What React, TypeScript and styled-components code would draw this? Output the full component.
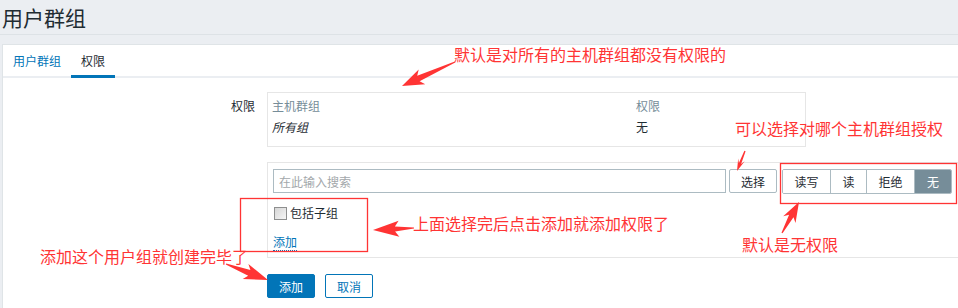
import { createGlobalStyle } from 'styled-components'
import styled from 'styled-components'

const GlobalStyle = createGlobalStyle`
  html, body {
    margin: 0;
    padding: 0;
    background: #ebeef2;
  }
  body {
    font-family: 'Noto Sans CJK SC', 'Liberation Sans', Arial, sans-serif;
    font-size: 12px;
    color: #1f2c33;
    overflow: hidden;
  }
`

const Page = styled.div`
  position: relative;
  width: 958px;
  height: 308px;
  overflow: hidden;
`

const Header = styled.div`
  height: 34px;
  padding: 0 0 1px 2px;
  display: flex;
  align-items: center;
  border-bottom: 1px solid #dde2e6;
  box-sizing: border-box;
  height: 35px;
`

const Title = styled.h1`
  margin: 0;
  font-size: 21px;
  font-weight: 400;
  line-height: 24px;
  color: #1f2c33;
`

const Panel = styled.div`
  margin: 9px 0 0 2px;
  background: #fff;
  border-top: 1px solid #dfe4e7;
  border-left: 1px solid #dfe4e7;
  min-height: 300px;
`

const TabBar = styled.div`
  display: flex;
  border-bottom: 2px solid #ebeef2;
  height: 31px;
`

const Tab = styled.div<{ active?: boolean }>`
  box-sizing: border-box;
  height: 33px;
  padding: 8px 10px 0;
  line-height: 16px;
  color: ${(p) => (p.active ? '#1f2c33' : '#0275b8')};
  border-bottom: 3px solid ${(p) => (p.active ? '#0275b8' : 'transparent')};
`

const Form = styled.div`
  display: grid;
  grid-template-columns: 252px 1fr;
  column-gap: 12px;
  row-gap: 15px;
  padding-top: 14px;
`

const Label = styled.div`
  text-align: right;
  line-height: 16px;
  padding-top: 6px;
`

const Empty = styled.div``

const TableBox = styled.div`
  box-sizing: border-box;
  width: 539px;
  border: 1px solid #e6e6e6;
  padding: 5px 4px 11px;
  display: grid;
  grid-template-columns: 364px 1fr;
  row-gap: 5px;
  line-height: 16px;
`

const HeadCell = styled.div`
  color: #768d99;
`

const Cell = styled.div<{ italic?: boolean }>`
  font-style: ${(p) => (p.italic ? 'italic' : 'normal')};
`

const EditBox = styled.div`
  box-sizing: border-box;
  width: 720px;
  border: 1px solid #e6e6e6;
  padding: 6px 5px 6px;
`

const SearchRow = styled.div`
  display: flex;
  align-items: flex-start;
`

const SearchInput = styled.input`
  box-sizing: border-box;
  width: 453px;
  height: 24px;
  border: 1px solid #acbbc2;
  padding: 0 5px;
  font: inherit;
  color: #1f2c33;
  outline: none;
  &::placeholder {
    color: #a3a8ab;
  }
`

const SelectButton = styled.button`
  box-sizing: border-box;
  margin-left: 3px;
  width: 48px;
  height: 24px;
  border: 1px solid #acbbc2;
  border-radius: 2px;
  background: #fff;
  font: inherit;
  color: #1f2c33;
  padding: 0;
`

const Segments = styled.div`
  display: flex;
  margin-left: 5px;
  border: 1px solid #acbbc2;
  border-radius: 2px;
  height: 25px;
  box-sizing: border-box;
  overflow: hidden;
`

const Segment = styled.div<{ selected?: boolean; w: number }>`
  width: ${(p) => p.w}px;
  display: flex;
  align-items: center;
  justify-content: center;
  background: ${(p) => (p.selected ? '#768d99' : '#fff')};
  color: ${(p) => (p.selected ? '#fff' : '#1f2c33')};
  & + & {
    border-left: 1px solid #acbbc2;
  }
`

const CheckRow = styled.label`
  display: flex;
  align-items: center;
  margin-top: 11px;
  line-height: 16px;
`

const Check = styled.input`
  appearance: none;
  margin: 0 3px 0 1px;
  width: 13px;
  height: 13px;
  border: 1px solid #8e8f8f;
  box-sizing: border-box;
  background: linear-gradient(135deg, #d6d6d6, #f6f6f6);
`

const AddLink = styled.span`
  display: inline-block;
  margin-top: 13px;
  line-height: 16px;
  color: #0275b8;
  border-bottom: 1px dotted #0275b8;
`

const Buttons = styled.div`
  display: flex;
  gap: 10px;
  margin-top: 1px;
`

const Button = styled.button<{ primary?: boolean }>`
  box-sizing: border-box;
  width: 48px;
  height: 24px;
  padding: 0;
  border: 1px solid #0275b8;
  border-radius: 2px;
  font: inherit;
  background: ${(p) => (p.primary ? '#0275b8' : '#fff')};
  color: ${(p) => (p.primary ? '#fff' : '#0275b8')};
`

const Overlay = styled.svg`
  position: absolute;
  left: 0;
  top: 0;
  pointer-events: none;
`

const Note = styled.div<{ x: number; y: number }>`
  position: absolute;
  left: ${(p) => p.x}px;
  top: ${(p) => p.y}px;
  font-size: 16px;
  line-height: 16px;
  color: #ff3434;
  white-space: nowrap;
`

const RED = '#ff3434'

function arrow(x1: number, y1: number, x2: number, y2: number, head: number, headW: number, neckW: number) {
  const dx = x2 - x1
  const dy = y2 - y1
  const len = Math.hypot(dx, dy)
  const ux = dx / len
  const uy = dy / len
  const px = -uy
  const py = ux
  const bx = x2 - ux * head
  const by = y2 - uy * head
  // barbs are swept back a bit
  const sx = x2 - ux * (head + 4)
  const sy = y2 - uy * (head + 4)
  const pts = [
    [x1 + px * 0.6, y1 + py * 0.6],
    [bx + px * neckW, by + py * neckW],
    [sx + px * headW, sy + py * headW],
    [x2, y2],
    [sx - px * headW, sy - py * headW],
    [bx - px * neckW, by - py * neckW],
    [x1 - px * 0.6, y1 - py * 0.6],
  ]
  return pts.map((p) => p.map((v) => v.toFixed(1)).join(',')).join(' ')
}

export default function App() {
  return (
    <Page>
      <GlobalStyle />
      <Header>
        <Title>用户群组</Title>
      </Header>
      <Panel>
        <TabBar>
          <Tab>用户群组</Tab>
          <Tab active>权限</Tab>
        </TabBar>
        <Form>
          <Label>权限</Label>
          <TableBox>
            <HeadCell>主机群组</HeadCell>
            <HeadCell>权限</HeadCell>
            <Cell italic>所有组</Cell>
            <Cell>无</Cell>
          </TableBox>

          <Empty />
          <EditBox>
            <SearchRow>
              <SearchInput placeholder="在此输入搜索" />
              <SelectButton>选择</SelectButton>
              <Segments>
                <Segment w={47}>读写</Segment>
                <Segment w={35}>读</Segment>
                <Segment w={47}>拒绝</Segment>
                <Segment w={36} selected>
                  无
                </Segment>
              </Segments>
            </SearchRow>
            <CheckRow>
              <Check type="checkbox" />
              包括子组
            </CheckRow>
            <AddLink>添加</AddLink>
          </EditBox>

          <Empty />
          <Buttons>
            <Button primary>添加</Button>
            <Button>取消</Button>
          </Buttons>
        </Form>
      </Panel>

      <Overlay width={958} height={308}>
        <polygon points={arrow(455, 62, 402, 86, 18, 8, 3)} fill={RED} />
        <polygon points={arrow(745, 151, 737, 171, 8, 3.5, 1.2)} fill={RED} />
        <polygon points={arrow(782, 233, 799, 202, 16, 7, 2.5)} fill={RED} />
        <polygon points={arrow(414, 228, 373, 230, 22, 8, 2.5)} fill={RED} />
        <polygon points={arrow(226, 264, 268, 280, 20, 8, 3)} fill={RED} />
        <rect x={780.5} y={163.5} width={176} height={40} fill="none" stroke={RED} strokeWidth={1.3} />
        <rect x={240.5} y={198.5} width={127} height={53} fill="none" stroke={RED} strokeWidth={1.3} />
      </Overlay>

      <Note x={454} y={46}>默认是对所有的主机群组都没有权限的</Note>
      <Note x={735} y={120}>可以选择对哪个主机群组授权</Note>
      <Note x={413} y={215}>上面选择完后点击添加就添加权限了</Note>
      <Note x={742} y={236}>默认是无权限</Note>
      <Note x={40} y={248}>添加这个用户组就创建完毕了</Note>
    </Page>
  )
}
